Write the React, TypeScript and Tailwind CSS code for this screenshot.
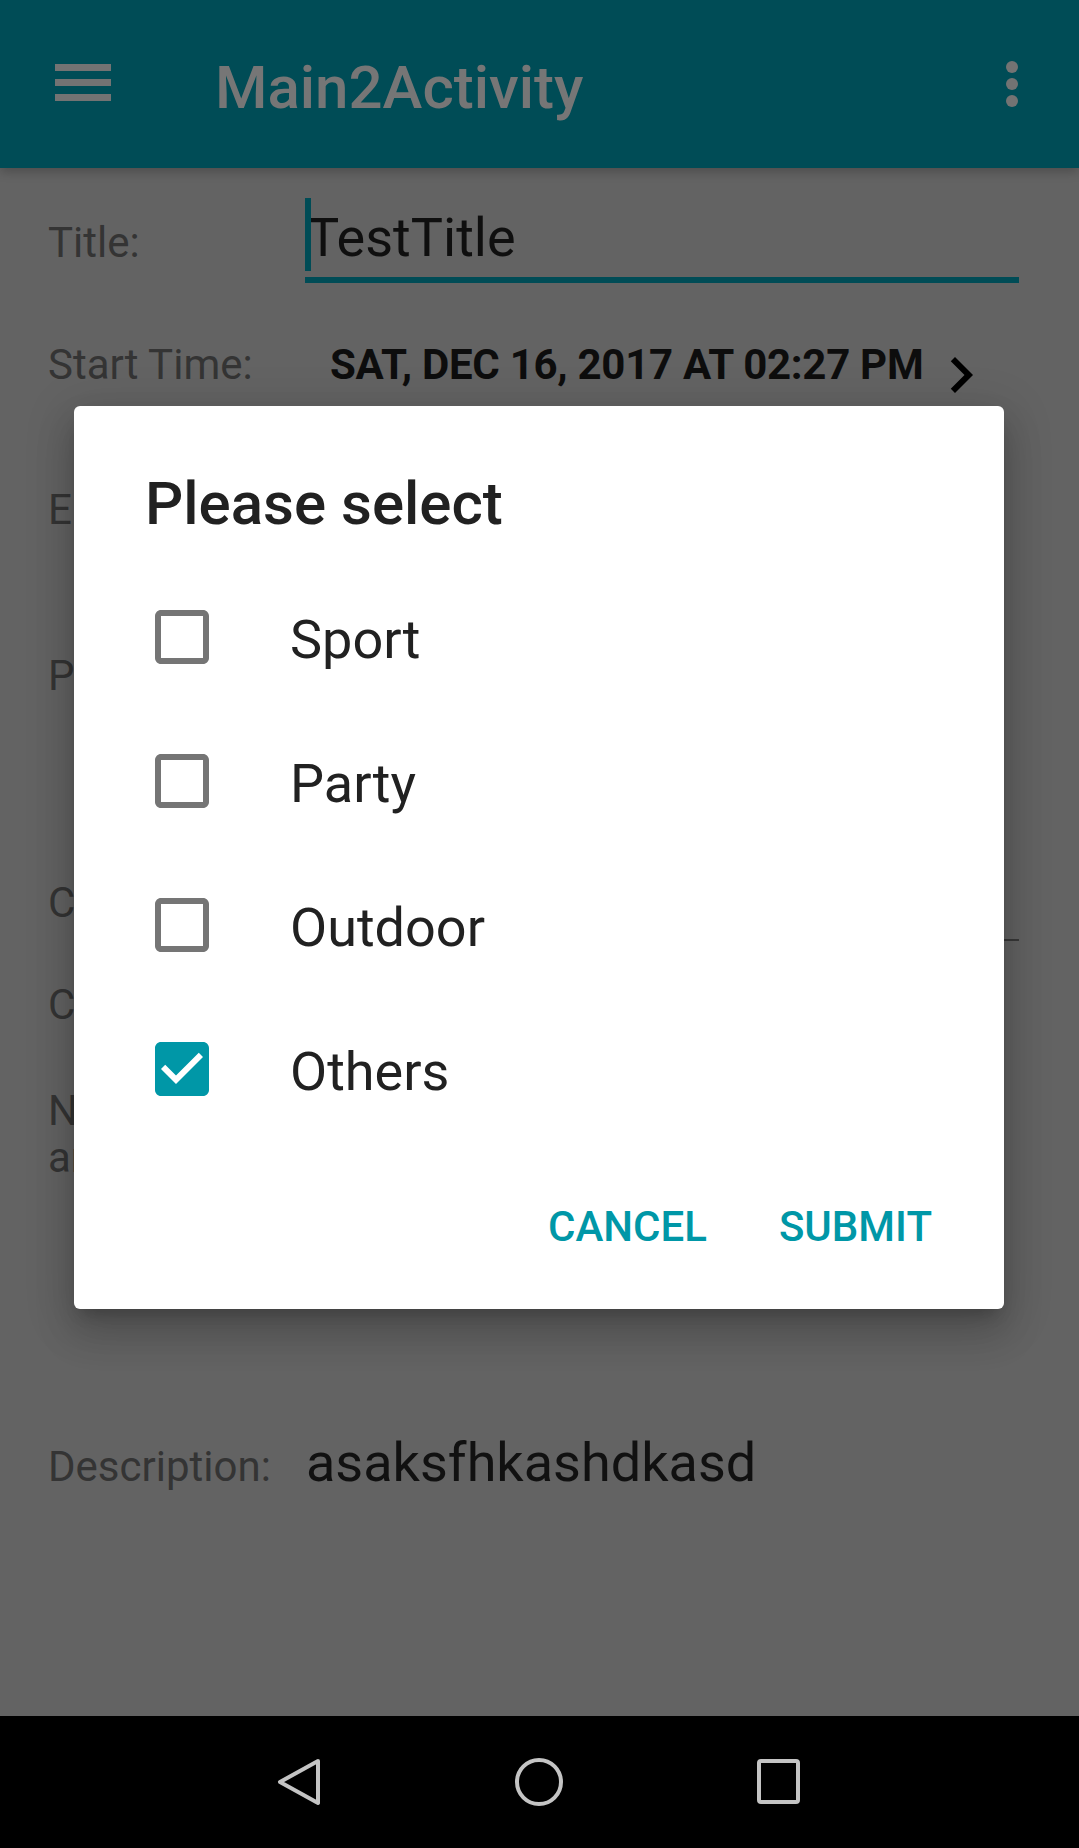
import React from "react";

function CheckBox({ checked }: { checked: boolean }) {
  return (
    <svg width="54" height="54" viewBox="3 3 18 18" className="shrink-0">
      {checked ? (
        <path
          fill="#0097a7"
          d="M19 3H5c-1.11 0-2 .9-2 2v14c0 1.1.89 2 2 2h14c1.11 0 2-.9 2-2V5c0-1.1-.89-2-2-2zm-9 14l-5-5 1.41-1.41L10 14.17l7.59-7.59L19 8l-9 9z"
        />
      ) : (
        <path
          fill="#757575"
          d="M19 5v14H5V5h14m0-2H5c-1.1 0-2 .9-2 2v14c0 1.1.9 2 2 2h14c1.1 0 2-.9 2-2V5c0-1.1-.9-2-2-2z"
        />
      )}
    </svg>
  );
}

const options = [
  { label: "Sport", checked: false },
  { label: "Party", checked: false },
  { label: "Outdoor", checked: false },
  { label: "Others", checked: true },
];

export default function App() {
  return (
    <div className="relative w-[1079px] h-[1848px] overflow-hidden flex flex-col bg-[#636363] font-['Roboto',sans-serif]">
      {/* App bar */}
      <header className="relative z-10 h-[168px] shrink-0 bg-[#004c56] flex items-start shadow-[0_4px_10px_rgba(0,0,0,0.22)]">
        <div className="ml-[55px] mt-[64px] flex flex-col gap-[8px]">
          <span className="block w-[56px] h-[7px] bg-[#737373]" />
          <span className="block w-[56px] h-[7px] bg-[#737373]" />
          <span className="block w-[56px] h-[7px] bg-[#737373]" />
        </div>
        <h1 className="ml-[104px] mt-[52px] text-[60px] leading-[72px] font-medium text-[#767676]">
          Main2Activity
        </h1>
        <div className="ml-auto mr-[61px] mt-[61px] flex flex-col gap-[5px]">
          <span className="block w-[12px] h-[12px] rounded-full bg-[#737373]" />
          <span className="block w-[12px] h-[12px] rounded-full bg-[#737373]" />
          <span className="block w-[12px] h-[12px] rounded-full bg-[#737373]" />
        </div>
      </header>

      {/* Form content (dimmed by the dialog scrim) */}
      <main className="flex-1 flex flex-col pl-[48px] text-[#343434]">
        <div className="mt-[38px] flex items-start">
          <span className="w-[257px] shrink-0 mt-[13px] text-[42px] leading-[48px]">Title:</span>
          <div className="relative flex-1 mr-[60px] border-b-[6px] border-[#004c56] pb-[7px]">
            <span className="absolute left-0 -top-[8px] w-[6px] h-[73px] bg-[#004c56]" />
            <span className="block pl-[2px] text-[54px] leading-[64px] text-[#0f0f0f]">TestTitle</span>
          </div>
        </div>

        <div className="mt-[56px] flex items-start">
          <span className="w-[257px] shrink-0 mt-[2px] text-[42px] leading-[48px]">Start Time:</span>
          <span className="ml-[25px] mt-[2px] text-[42px] leading-[48px] font-bold tracking-[-0.28px] text-[#0d0d0d] whitespace-nowrap">
            SAT, DEC 16, 2017 AT 02:27 PM
          </span>
          <svg width="72" height="72" viewBox="0 0 24 24" className="ml-[2px] shrink-0">
            <path fill="#000" d="M10 6L8.59 7.41 13.17 12l-4.58 4.59L10 18l6-6z" />
          </svg>
        </div>

        <div className="mt-[75px] flex items-start">
          <span className="w-[257px] shrink-0 text-[42px] leading-[48px]">End Time:</span>
        </div>

        <div className="mt-[118px] flex items-start">
          <span className="w-[257px] shrink-0 text-[42px] leading-[48px]">Place:</span>
        </div>

        <div className="mt-[179px] flex items-start">
          <span className="w-[257px] shrink-0 text-[42px] leading-[48px]">Contact:</span>
          <div className="flex-1 mr-[60px] border-b-[2px] border-[#383838] pb-[12px]">
            <span className="block h-[48px]" />
          </div>
        </div>

        <div className="mt-[40px] flex items-start">
          <span className="w-[257px] shrink-0 text-[42px] leading-[48px]">Category:</span>
        </div>

        <div className="mt-[58px] flex items-start">
          <span className="w-[257px] shrink-0 text-[42px] leading-[47px]">
            Notify me
            <br />
            arrival:
          </span>
        </div>

        <div className="mt-[250px] flex items-start">
          <span className="w-[257px] shrink-0 mt-[12px] text-[42px] leading-[48px]">Description:</span>
          <span className="ml-[1px] text-[54px] leading-[64px] text-[#111111]">asaksfhkashdkasd</span>
        </div>
      </main>

      {/* Navigation bar */}
      <nav className="h-[132px] shrink-0 bg-black flex items-center pl-[275px] gap-[192px]">
        <svg width="48" height="48" viewBox="0 0 48 48">
          <path d="M43 3 L5 24 L43 45 Z" fill="none" stroke="#c4c4c4" strokeWidth="4" strokeLinejoin="round" />
        </svg>
        <svg width="48" height="48" viewBox="0 0 48 48">
          <circle cx="24" cy="24" r="22" fill="none" stroke="#c4c4c4" strokeWidth="4" />
        </svg>
        <svg width="48" height="48" viewBox="0 0 48 48">
          <rect x="4" y="3" width="39" height="41" rx="2" fill="none" stroke="#c4c4c4" strokeWidth="4" />
        </svg>
      </nav>

      {/* Dialog */}
      <div className="absolute z-20 left-[74px] top-[406px] w-[930px] bg-white rounded-[6px] pt-[62px] pb-[58px] shadow-[0_24px_38px_3px_rgba(0,0,0,0.14),0_9px_46px_8px_rgba(0,0,0,0.12),0_11px_15px_-7px_rgba(0,0,0,0.2)]">
        <h2 className="pl-[71px] text-[60px] leading-[72px] font-medium text-[#212121]">Please select</h2>
        <ul className="mt-[25px] flex flex-col">
          {options.map((o) => (
            <li key={o.label} className="h-[144px] flex items-center pl-[81px]">
              <CheckBox checked={o.checked} />
              <span className="ml-[81px] mt-[5px] text-[54px] leading-[64px] text-[#212121]">{o.label}</span>
            </li>
          ))}
        </ul>
        <div className="mt-[62px] flex justify-end pr-[48px] gap-[24px]">
          <button className="px-[24px] text-[42px] leading-[48px] font-medium text-[#0097a7]">CANCEL</button>
          <button className="px-[24px] text-[42px] leading-[48px] font-medium text-[#0097a7]">SUBMIT</button>
        </div>
      </div>
    </div>
  );
}
